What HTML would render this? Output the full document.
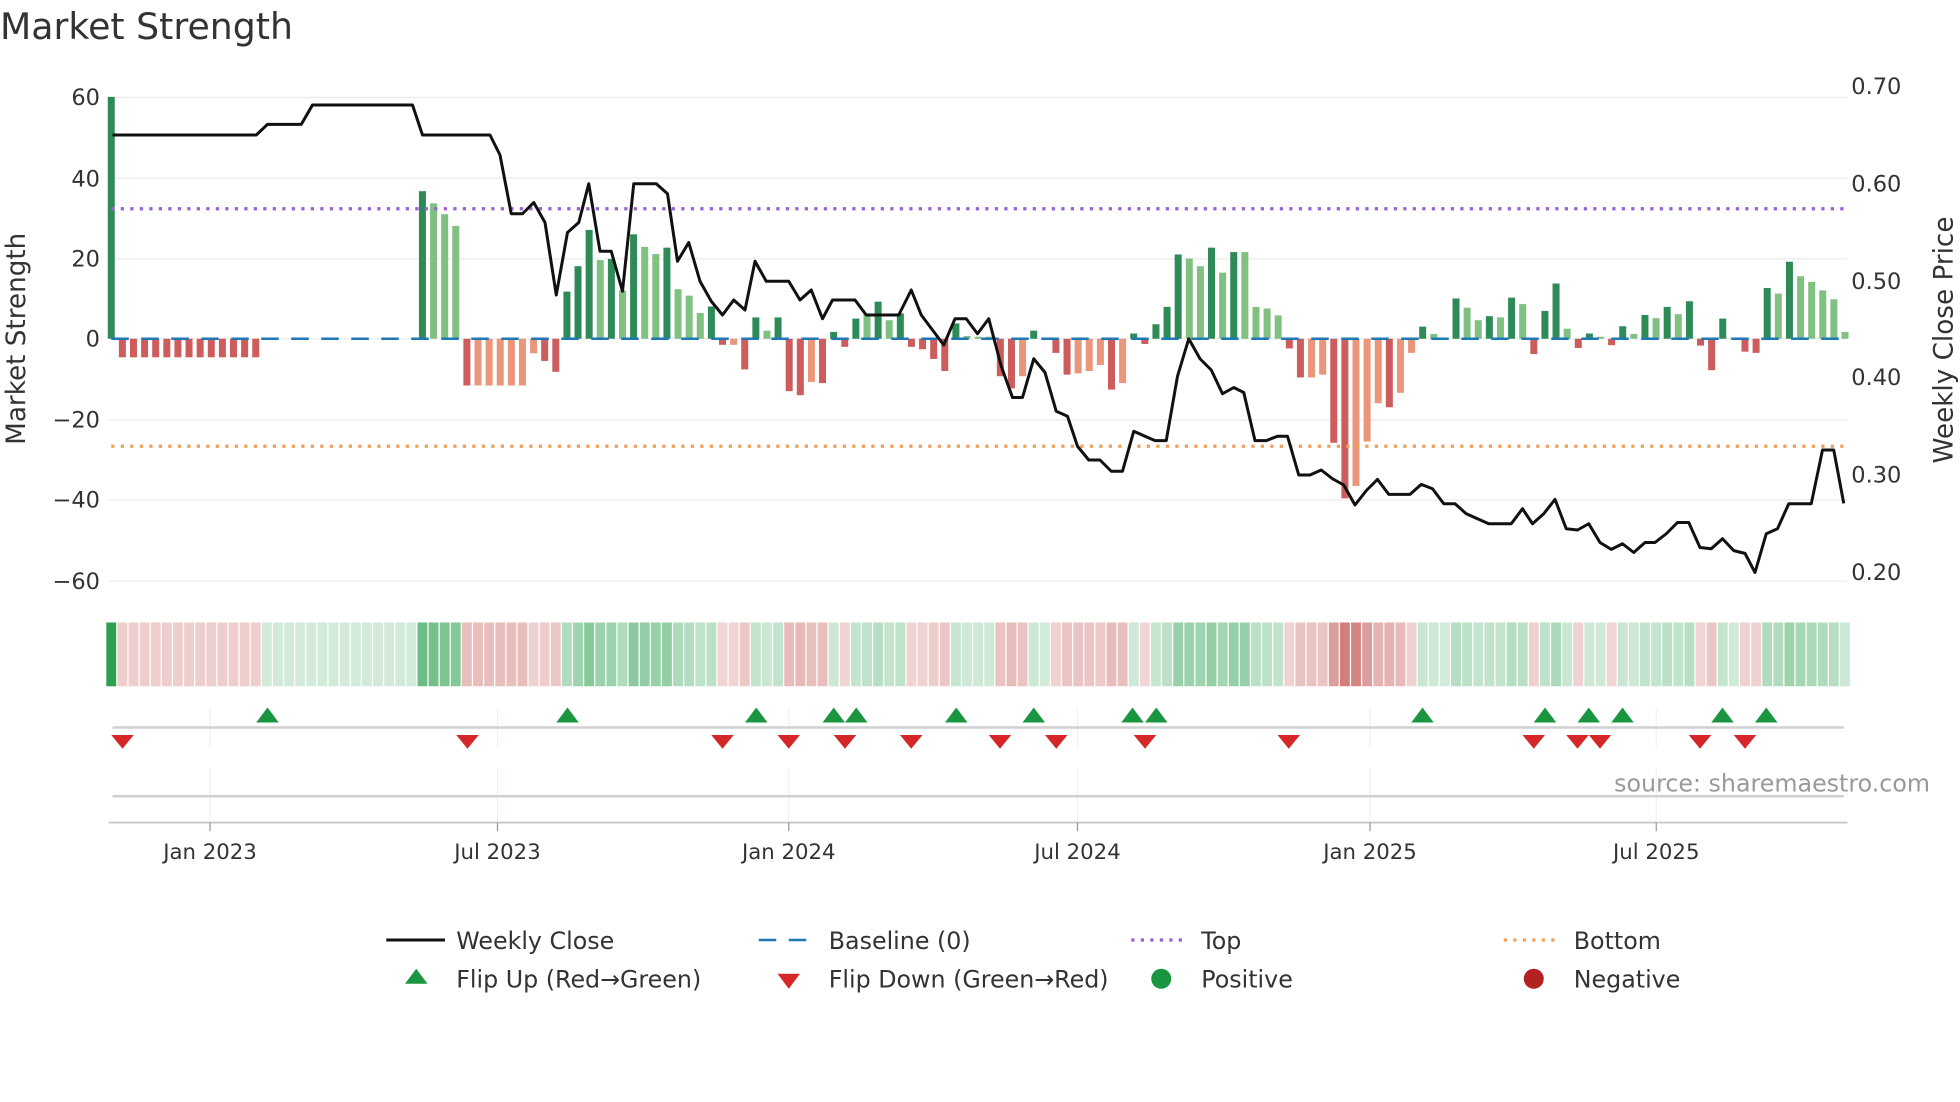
<!DOCTYPE html>
<html><head><meta charset="utf-8">
<style>
html,body{margin:0;padding:0;background:#fff;}
svg{display:block;}
text{font-family:"DejaVu Sans","Liberation Sans",sans-serif;fill:#333;}
</style></head>
<body>
<svg id="s" width="1960" height="1102" viewBox="0 0 1568 881.6" xmlns="http://www.w3.org/2000/svg">
<rect width="1568" height="882" fill="#fff"/>
<text x="0" y="31" font-size="29">Market Strength</text>
<g stroke="#ebebeb" stroke-width="1">
<line x1="87" x2="1478" y1="78" y2="78"/><line x1="87" x2="1478" y1="142.5" y2="142.5"/>
<line x1="87" x2="1478" y1="207" y2="207"/><line x1="87" x2="1478" y1="271" y2="271"/>
<line x1="87" x2="1478" y1="336" y2="336"/><line x1="87" x2="1478" y1="400" y2="400"/>
<line x1="87" x2="1478" y1="465" y2="465"/>
</g>
<g font-size="18" text-anchor="end">
<text x="80" y="84">60</text><text x="80" y="149">40</text><text x="80" y="213">20</text>
<text x="80" y="277">0</text><text x="80" y="342">−20</text><text x="80" y="406">−40</text><text x="80" y="471">−60</text>
</g>
<g font-size="18">
<text x="1481" y="75">0.70</text><text x="1481" y="153">0.60</text><text x="1481" y="231">0.50</text>
<text x="1481" y="308">0.40</text><text x="1481" y="386">0.30</text><text x="1481" y="464">0.20</text>
</g>
<text font-size="21" transform="translate(20,271) rotate(-90)" text-anchor="middle">Market Strength</text>
<text font-size="21" transform="translate(1562,272) rotate(-90)" text-anchor="middle">Weekly Close Price</text>
<g id="bars"></g>
<line x1="89" x2="1476" y1="271" y2="271" stroke="#1f77b4" stroke-width="2" stroke-dasharray="14,10"/>
<line x1="89" x2="1476" y1="167" y2="167" stroke="#9b5fd6" stroke-width="2.6" stroke-dasharray="2.6,5"/>
<line x1="89" x2="1476" y1="357" y2="357" stroke="#f0a05a" stroke-width="2.6" stroke-dasharray="2.6,5"/>
<polyline fill="none" stroke="#111" stroke-width="2.4" stroke-linejoin="round" points="90,108 205,108 214,99.5 241,99.5 250,84 330,84 338,108 392,108 400,124 409,171 418,171 427,162 436,178 445,236 454,186 463,178 471,147 480,201 489,201 498,233 507,147 525,147 534,155 542,209 551,194 560,225 569,241 578,252 587,240 596,248 604,209 613,225 631,225 640,240 649,232 658,255 666,240 684,240 693,252 719,252 729,232 737,252 755,276 764,255 773,255 782,267 791,255 801,293 810,318 818,318 827,287 836,298 845,329 854,333 862,357 871,368 880,368 889,377 898,377 907,345 916,349 924,352.5 933,352.5 942,301 951,271 960,287 969,296 978,315 987,310 995,314 1004,352.5 1013,352.5 1022,349 1030,349 1039,380 1048,380 1057,376 1066,383 1075,388 1084,404 1093,392.5 1102,383.5 1111,395.5 1128,395.5 1137,387.5 1146,391 1155,403 1164,403 1173,411 1182,415 1191,419 1209,419 1218,407 1226,419 1235,411 1244,399.5 1253,423 1262,424 1271,419 1280,434 1289,439.5 1298,435 1307,442 1316,434 1324,434 1333,427 1342,418 1351,418 1360,438 1369,439 1378,431 1387,440.5 1396,442.7 1404,458 1413,427 1422,423 1431,403 1449,403 1458,360 1467,360 1475,402.7"/>
<g id="heat"></g>
<g stroke="#eef2f4" stroke-width="1">
<line x1="168" x2="168" y1="566" y2="598"/><line x1="398" x2="398" y1="566" y2="598"/><line x1="631" x2="631" y1="566" y2="598"/>
<line x1="862" x2="862" y1="566" y2="598"/><line x1="1096" x2="1096" y1="566" y2="598"/><line x1="1325" x2="1325" y1="566" y2="598"/>
<line x1="168" x2="168" y1="614" y2="658"/><line x1="398" x2="398" y1="614" y2="658"/><line x1="631" x2="631" y1="614" y2="658"/>
<line x1="862" x2="862" y1="614" y2="658"/><line x1="1096" x2="1096" y1="614" y2="658"/><line x1="1325" x2="1325" y1="614" y2="658"/>
</g>
<line x1="90" x2="1475" y1="582" y2="582" stroke="#d0d0d0" stroke-width="2"/>
<line x1="90" x2="1475" y1="637" y2="637" stroke="#d0d0d0" stroke-width="2"/>
<line x1="87" x2="1478" y1="658" y2="658" stroke="#c8c8c8" stroke-width="1.5"/>
<g stroke="#999" stroke-width="1">
<line x1="168" x2="168" y1="658" y2="665"/><line x1="398" x2="398" y1="658" y2="665"/><line x1="631" x2="631" y1="658" y2="665"/>
<line x1="862" x2="862" y1="658" y2="665"/><line x1="1096" x2="1096" y1="658" y2="665"/><line x1="1325" x2="1325" y1="658" y2="665"/>
</g>
<g id="marks"></g>
<text x="1544" y="633" font-size="19" text-anchor="end" style="fill:#999">source: sharemaestro.com</text>
<g font-size="17" text-anchor="middle">
<text x="168" y="687">Jan 2023</text><text x="398" y="687">Jul 2023</text><text x="631" y="687">Jan 2024</text>
<text x="862" y="687">Jul 2024</text><text x="1096" y="687">Jan 2025</text><text x="1325" y="687">Jul 2025</text>
</g>
<line x1="309" x2="356" y1="752" y2="752" stroke="#111" stroke-width="2.4"/>
<line x1="607" x2="652" y1="752" y2="752" stroke="#1f77b4" stroke-width="2" stroke-dasharray="14,10"/>
<line x1="905" x2="948" y1="752" y2="752" stroke="#9b5fd6" stroke-width="2.6" stroke-dasharray="2.6,5"/>
<line x1="1203" x2="1247" y1="752" y2="752" stroke="#f0a05a" stroke-width="2.6" stroke-dasharray="2.6,5"/>
<polygon points="333,775 342,787 324,787" fill="#1a9641"/>
<polygon points="622,779 640,779 631,791" fill="#d62728"/>
<circle cx="929" cy="783" r="8" fill="#1a9641"/>
<circle cx="1227" cy="783" r="8" fill="#b22222"/>
<g font-size="19">
<text x="365" y="759">Weekly Close</text><text x="663" y="759">Baseline (0)</text>
<text x="961" y="759">Top</text><text x="1259" y="759">Bottom</text>
<text x="365" y="790">Flip Up (Red→Green)</text><text x="663" y="790">Flip Down (Green→Red)</text>
<text x="961" y="790">Positive</text><text x="1259" y="790">Negative</text>
</g>
</svg>
<script>
(function(){
var NS="http://www.w3.org/2000/svg";
var d=[[60,'D']];
for(var i=1;i<=13;i++)d.push([-4.6,'R']);
for(i=14;i<=27;i++)d.push([0,'N']);
var rest=[[36.6,'D'],[33.6,'L'],[30.9,'L'],[28,'L'],[-11.6,'R'],[-11.6,'O'],[-11.6,'O'],[-11.6,'O'],[-11.6,'O'],[-11.6,'O'],
[-3.6,'O'],[-5.5,'R'],[-8.2,'R'],[11.7,'D'],[18,'D'],[27,'D'],[19.5,'L'],[19.8,'D'],[12,'L'],[25.9,'D'],[22.8,'L'],[21,'L'],[22.6,'D'],
[12.3,'L'],[10.7,'L'],[6.4,'L'],[8,'D'],[-1.5,'R'],[-1.5,'O'],[-7.6,'R'],[5.3,'D'],[2,'L'],[5.3,'D'],[-13,'R'],[-14,'R'],[-10.7,'O'],
[-11,'R'],[1.7,'D'],[-2,'R'],[5,'D'],[6.3,'L'],[9.2,'D'],[4.6,'L'],[6.3,'D'],[-2,'R'],[-2.6,'R'],[-5,'R'],[-8,'R'],[3.8,'D'],[0.7,'L'],
[0.5,'L'],[0.5,'L'],[-9.3,'R'],[-12.3,'R'],[-9.3,'O'],[2,'D'],[0,'N'],[-3.5,'R'],[-8.9,'R'],[-8.6,'O'],[-8,'O'],[-6.5,'O'],[-12.6,'R'],
[-11,'O'],[1.3,'D'],[-1.3,'R'],[3.6,'D'],[7.9,'D'],[20.9,'D'],[19.9,'L'],[18,'L'],[22.6,'D'],[16.4,'L'],[21.5,'D'],[21.5,'L'],[7.9,'L'],
[7.5,'L'],[5.8,'L'],[-2.4,'R'],[-9.6,'R'],[-9.6,'O'],[-8.9,'O'],[-25.8,'R'],[-39.6,'R'],[-36.5,'O'],[-25.5,'O'],[-16,'O'],[-17,'R'],
[-13.4,'O'],[-3.5,'O'],[3,'D'],[1.2,'L'],[0,'N'],[10,'D'],[7.7,'L'],[4.6,'L'],[5.6,'D'],[5.3,'L'],[10.2,'D'],[8.6,'L'],[-3.8,'R'],
[6.9,'D'],[13.7,'D'],[2.5,'L'],[-2.3,'R'],[1.3,'D'],[0.5,'L'],[-1.6,'R'],[3.1,'D'],[1.2,'L'],[5.9,'D'],[5.1,'L'],[7.9,'D'],[6.1,'L'],
[9.3,'D'],[-1.7,'R'],[-7.8,'R'],[5,'D'],[0.3,'L'],[-3.2,'R'],[-3.5,'R'],[12.6,'D'],[11.2,'L'],[19.1,'D'],[15.5,'L'],[14.1,'L'],[12,'L'],
[9.8,'L'],[1.7,'L']];
d=d.concat(rest);
var col={D:'#2e8b57',L:'#80c080',R:'#cd5c5c',O:'#e9967a'};
var bars=document.getElementById('bars'),heat=document.getElementById('heat');
var p=(1476-89)/(d.length-1);
function mix(c,t){return 'rgb('+c.map(function(v){return Math.round(255+(v-255)*t);}).join(',')+')';}
for(i=0;i<d.length;i++){
 var x=89+i*p,v=d[i][0],k=d[i][1];
 if(k!='N'&&v!=0){
  var y0=271,y1=271-v*3.225;
  var r=document.createElementNS(NS,'rect');
  r.setAttribute('x',x-2.8);r.setAttribute('width',5.6);
  r.setAttribute('y',Math.min(y0,y1));r.setAttribute('height',Math.max(0.8,Math.abs(y1-y0)));
  r.setAttribute('fill',col[k]);bars.appendChild(r);
 }
 var t=0.22+Math.abs(v)/60*0.78;if(t>1)t=1;
 var c=(v>=0)?mix([44,160,80],t):mix([192,80,77],t);
 var h=document.createElementNS(NS,'rect');
 h.setAttribute('x',x-p/2+0.5);h.setAttribute('width',p-1);
 h.setAttribute('y',498);h.setAttribute('height',51);h.setAttribute('fill',c);heat.appendChild(h);
}
var ups=[214,454,605,667,685,765,827,906,925,1138,1236,1271,1298,1378,1413];
var dns=[98,374,578,631,676,729,800,845,916,1031,1227,1262,1280,1360,1396];
var m=document.getElementById('marks');
ups.forEach(function(x){var g=document.createElementNS(NS,'polygon');g.setAttribute('points',x+','+566+' '+(x+9)+','+578+' '+(x-9)+','+578);g.setAttribute('fill','#1a9641');m.appendChild(g);});
dns.forEach(function(x){var g=document.createElementNS(NS,'polygon');g.setAttribute('points',(x-9)+','+588+' '+(x+9)+','+588+' '+x+','+599);g.setAttribute('fill','#d62728');m.appendChild(g);});
})();
</script>
</body></html>
